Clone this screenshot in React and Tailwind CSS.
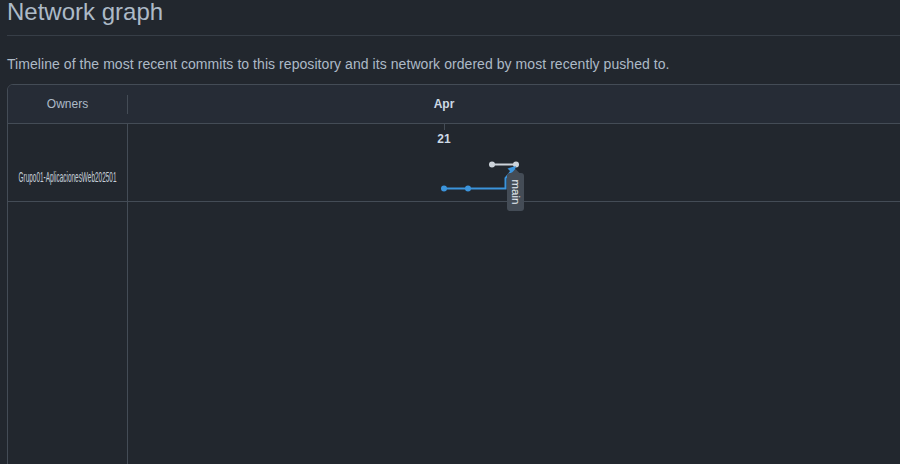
import React from "react";

function Graph() {
  return (
    <svg
      className="absolute left-0 top-0"
      width="800"
      height="340"
      viewBox="0 0 800 340"
    >
      {/* tick for day 21 */}
      <line x1="316.5" y1="0" x2="316.5" y2="6" stroke="#444c56" strokeWidth="1" />
      {/* gray branch */}
      <line x1="364" y1="40.5" x2="388" y2="40.5" stroke="#cdd3da" strokeWidth="2" />
      <circle cx="364" cy="40.5" r="3" fill="#cdd3da" />
      <circle cx="388" cy="40.5" r="3" fill="#cdd3da" />
      {/* blue branch */}
      <path
        d="M316 64.5 H377.5 V54 L383.5 47"
        fill="none"
        stroke="#3b94dc"
        strokeWidth="2"
      />
      <polygon points="388,42 379.5,44.5 385.5,50.5" fill="#3b94dc" />
      <circle cx="316" cy="64.5" r="3" fill="#3b94dc" />
      <circle cx="340" cy="64.5" r="3" fill="#3b94dc" />
      {/* label */}
      <g>
        <polygon points="382.5,50 387.5,45 392.5,50" fill="#444c56" />
        <rect x="379" y="49" width="17" height="38" rx="3" fill="#444c56" />
        <text
          x="387.5"
          y="68"
          fill="#e6edf3"
          fontSize="11.5"
          fontFamily="'Liberation Sans', Arial, sans-serif"
          textAnchor="middle"
          dominantBaseline="central"
          transform="rotate(90 387.5 68)"
        >
          main
        </text>
      </g>
    </svg>
  );
}

export default function App() {
  return (
    <div className="h-[464px] w-[900px] overflow-hidden bg-[#22272e] font-['Liberation_Sans',Arial,sans-serif] text-[#adbac7]">
      <div className="flex flex-col pl-[7px]">
        <div className="flex h-[36px] flex-col border-b border-[#373e47]">
          <h2 className="-mt-[3px] text-[24px] font-normal leading-[30px] text-[#adbac7]">
            Network graph
          </h2>
        </div>
        <p className="mt-[18px] text-[14px] leading-[21px] tracking-[0.06px] text-[#adbac7]">
          Timeline of the most recent commits to this repository and its network ordered by most recently pushed to.
        </p>
        <div className="mt-[9px] w-[1000px] overflow-hidden rounded-tl-md border border-[#444c56]">
          <div className="flex h-[39px] border-b border-[#444c56] bg-[#262c36]">
            <div className="flex w-[119px] items-center justify-center text-[12px] text-[#adbac7]">
              Owners
            </div>
            <div className="h-[19px] w-px self-center bg-[#444c56]" />
            <div className="flex flex-1 items-center pl-[304px]">
              <span className="w-[24px] text-center text-[12px] font-bold text-[#cdd9e5]">Apr</span>
            </div>
          </div>
          <div className="flex h-[400px]">
            <div className="w-[120px] border-r border-[#444c56]">
              <div className="flex h-[78px] justify-center border-b border-[#444c56] pt-[46px]">
                <span className="inline-block scale-x-[0.46] whitespace-nowrap text-[14px] leading-[14px] text-[#c5ced8]">
                  Grupo01-AplicacionesWeb202501
                </span>
              </div>
            </div>
            <div className="relative flex-1">
              <div className="h-[78px] border-b border-[#444c56] pl-[306px] pt-[2px]">
                <span className="inline-block w-[20px] text-center text-[12px] font-bold leading-[12px] text-[#cdd9e5]">
                  21
                </span>
              </div>
              <Graph />
            </div>
          </div>
        </div>
      </div>
    </div>
  );
}
